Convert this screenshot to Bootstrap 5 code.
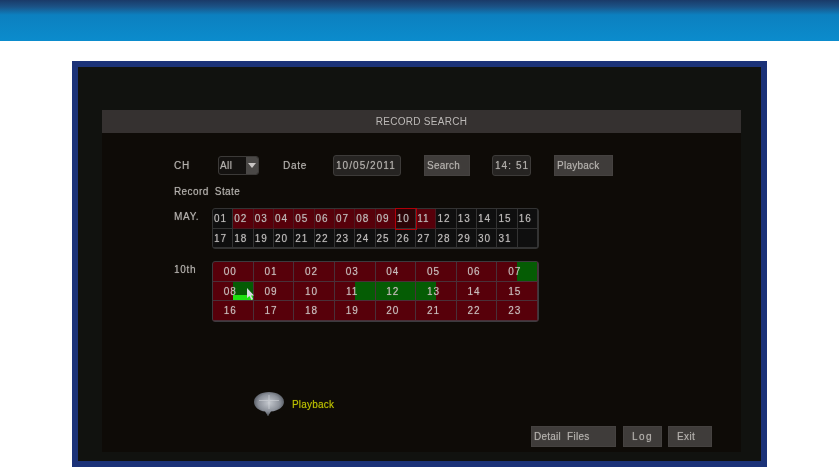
<!DOCTYPE html>
<html lang="en">
<head>
<meta charset="utf-8">
<title>Record Search</title>
<link href="https://cdn.jsdelivr.net/npm/bootstrap@5.3.0/dist/css/bootstrap.min.css" rel="stylesheet">
<style>
html,body{height:467px;overflow:hidden;background:#fff;}
body{font-family:"Liberation Sans",Arial,sans-serif;font-size:10px;color:#b4b1ad;}
.topbar{height:41px;background:linear-gradient(#1a3a68 0,#1b5488 7px,#0c80c0 15px,#0b8ccd 41px);}
.stage{padding:20px 72px 0;}
.frame{width:695px;height:406px;background:#11120f;border:6px solid #1b3278;padding:43px 20px 0 24px;}
.screen{height:342px;width:639px;background:#0e0b07;display:flex;flex-direction:column;filter:blur(.4px);}
.titlebar{height:23px;flex:none;background:#353130;color:#bcb9b7;letter-spacing:.3px;line-height:24px;text-align:center;font-size:10px;}
.body-pad{padding:20px 0 0 72px;flex:1;position:relative;}
.line1{height:24px;display:flex;align-items:center;}
.lbl{letter-spacing:.7px;text-shadow:0 0 1px rgba(180,177,173,.6);}
.ch{width:44px;}
.sel{width:41px;height:19px;border-radius:3px;background:#141210;border:1px solid #3c3a38;display:flex;justify-content:space-between;}
.sel span{padding-left:1px;line-height:17px;letter-spacing:.4px;text-shadow:0 0 1px rgba(180,177,173,.6);}
.sel i{width:12px;background:#4a4846;display:flex;align-items:center;justify-content:center;border-radius:0 2px 2px 0;}
.sel i::after{content:"";border:4px solid transparent;border-top:5px solid #c9c6c4;border-bottom:0;}
.fld{height:21px;background:#262422;border:1px solid #3d3b39;border-radius:3px;line-height:19px;padding-left:2px;letter-spacing:1.05px;text-shadow:0 0 1px rgba(180,177,173,.6);}
.bt{height:21px;background:#3f3c3a;line-height:20px;padding-left:2px;letter-spacing:.25px;border:1px solid #454240;text-shadow:0 0 1px rgba(180,177,173,.6);}
.state{margin-top:7px;height:16px;line-height:16px;letter-spacing:.4px;word-spacing:3px;}
.rowline{display:flex;}
.tag{width:38px;flex:none;line-height:18px;}
.days{width:327px;display:grid;grid-template-columns:repeat(16,1fr);grid-auto-rows:19.5px;border:1px solid #333;border-radius:3px;background:#0f0f0f;}
.days div{border-right:1px solid #333;border-bottom:1px solid #333;padding-left:1px;line-height:20px;letter-spacing:1px;font-size:10px;color:#bfbcbb;text-shadow:0 0 1px rgba(190,187,186,.6);overflow:hidden;}
.days .rec{background:#57000a;border-color:#4a1a20;}
.days .now{outline:1px solid #b00008;outline-offset:0;background:#2a0406;position:relative;z-index:1;}
.hours{width:327px;display:grid;grid-template-columns:repeat(8,1fr);grid-auto-rows:19.6px;border:1px solid #3c3a3e;border-radius:3px;background:#57000a;position:relative;}
.hours div{border-right:1px solid #4a3038;border-bottom:1px solid #4a3038;text-align:center;padding-right:5px;line-height:20px;letter-spacing:1px;font-size:10px;color:#c8bcbc;text-shadow:0 0 1px rgba(200,188,188,.6);}
.g-right{background:linear-gradient(90deg,transparent 50%,#055c04 50%);}
.g-all{background:#055c04;}
.g-left{background:linear-gradient(90deg,#055c04 50%,transparent 50%);}
.g-bar{background:linear-gradient(#1fe012,#1fe012) right bottom/50% 5px no-repeat,linear-gradient(90deg,transparent 50%,#055c04 50%);}
.cursor{position:absolute;left:33px;top:26px;width:9px;height:13px;}
.hint{display:flex;align-items:center;gap:7px;position:absolute;left:151px;top:258px;color:#bcc000;font-size:10px;letter-spacing:.2px;text-shadow:0 0 1px rgba(188,192,0,.5);}
.foot{position:absolute;right:29px;bottom:5px;display:flex;}
.log{letter-spacing:1.4px;}
</style>
</head>
<body>
<div class="topbar"></div>
<div class="stage">
<div class="frame">
<div class="screen">
<div class="titlebar">RECORD SEARCH</div>
<div class="body-pad">
<div class="line1">
<span class="lbl ch">CH</span>
<div class="sel"><span>All</span><i></i></div>
<span class="lbl ms-4" style="width:50px">Date</span>
<div class="fld" style="width:68px">10/05/2011</div>
<div class="bt" style="width:46px;margin-left:23px">Search</div>
<div class="fld" style="width:39px;margin-left:22px">14: 51</div>
<div class="bt" style="width:59px;margin-left:23px">Playback</div>
</div>
<div class="lbl state">Record State</div>
<div class="rowline" style="margin-top:8px">
<span class="lbl tag">MAY.</span>
<div class="days">
<div>01</div><div class="rec">02</div><div class="rec">03</div><div class="rec">04</div><div class="rec">05</div><div class="rec">06</div><div class="rec">07</div><div class="rec">08</div><div class="rec">09</div><div class="now">10</div><div class="rec">11</div><div>12</div><div>13</div><div>14</div><div>15</div><div>16</div>
<div>17</div><div>18</div><div>19</div><div>20</div><div>21</div><div>22</div><div>23</div><div>24</div><div>25</div><div>26</div><div>27</div><div>28</div><div>29</div><div>30</div><div>31</div><div></div>
</div>
</div>
<div class="rowline" style="margin-top:12px">
<span class="lbl tag">10th</span>
<div class="hours">
<div>00</div><div>01</div><div>02</div><div>03</div><div>04</div><div>05</div><div>06</div><div class="g-right">07</div>
<div class="g-bar">08</div><div>09</div><div>10</div><div class="g-right">11</div><div class="g-all">12</div><div class="g-left">13</div><div>14</div><div>15</div>
<div>16</div><div>17</div><div>18</div><div>19</div><div>20</div><div>21</div><div>22</div><div>23</div>
<svg class="cursor" viewBox="0 0 9 13"><path d="M1 0 L1 10 L3.500 8 L5.500 12 L7 11 L5 7.500 L8 7.500 Z" fill="#d8d8e0"/></svg>
</div>
</div>
<div class="hint">
<svg width="32" height="26" viewBox="0 0 32 26"><defs><radialGradient id="bub" cx=".5" cy=".45" r=".55"><stop offset="0" stop-color="#c4c8ce"/><stop offset=".65" stop-color="#8b9099"/><stop offset=".9" stop-color="#5e636b"/><stop offset="1" stop-color="#a8acb2"/></radialGradient></defs><path d="M16 1C8 1 1 5 1 11C1 16 6 20 12 20.500L15 25L18 20.500C25 20 31 16 31 11C31 5 24 1 16 1Z" fill="url(#bub)"/><path d="M16 4V18M6 9.500H26" stroke="#d4d7dc" stroke-width="1.200" opacity=".55"/></svg>
<span>Playback</span>
</div>
<div class="foot">
<div class="bt" style="width:85px">Detail&nbsp; Files</div>
<div class="bt log ps-2" style="width:39px;margin-left:7px">Log</div>
<div class="bt log ps-2" style="width:44px;margin-left:6px;letter-spacing:.4px">Exit</div>
</div>
</div>
</div>
</div>
</div>
</body>
</html>
